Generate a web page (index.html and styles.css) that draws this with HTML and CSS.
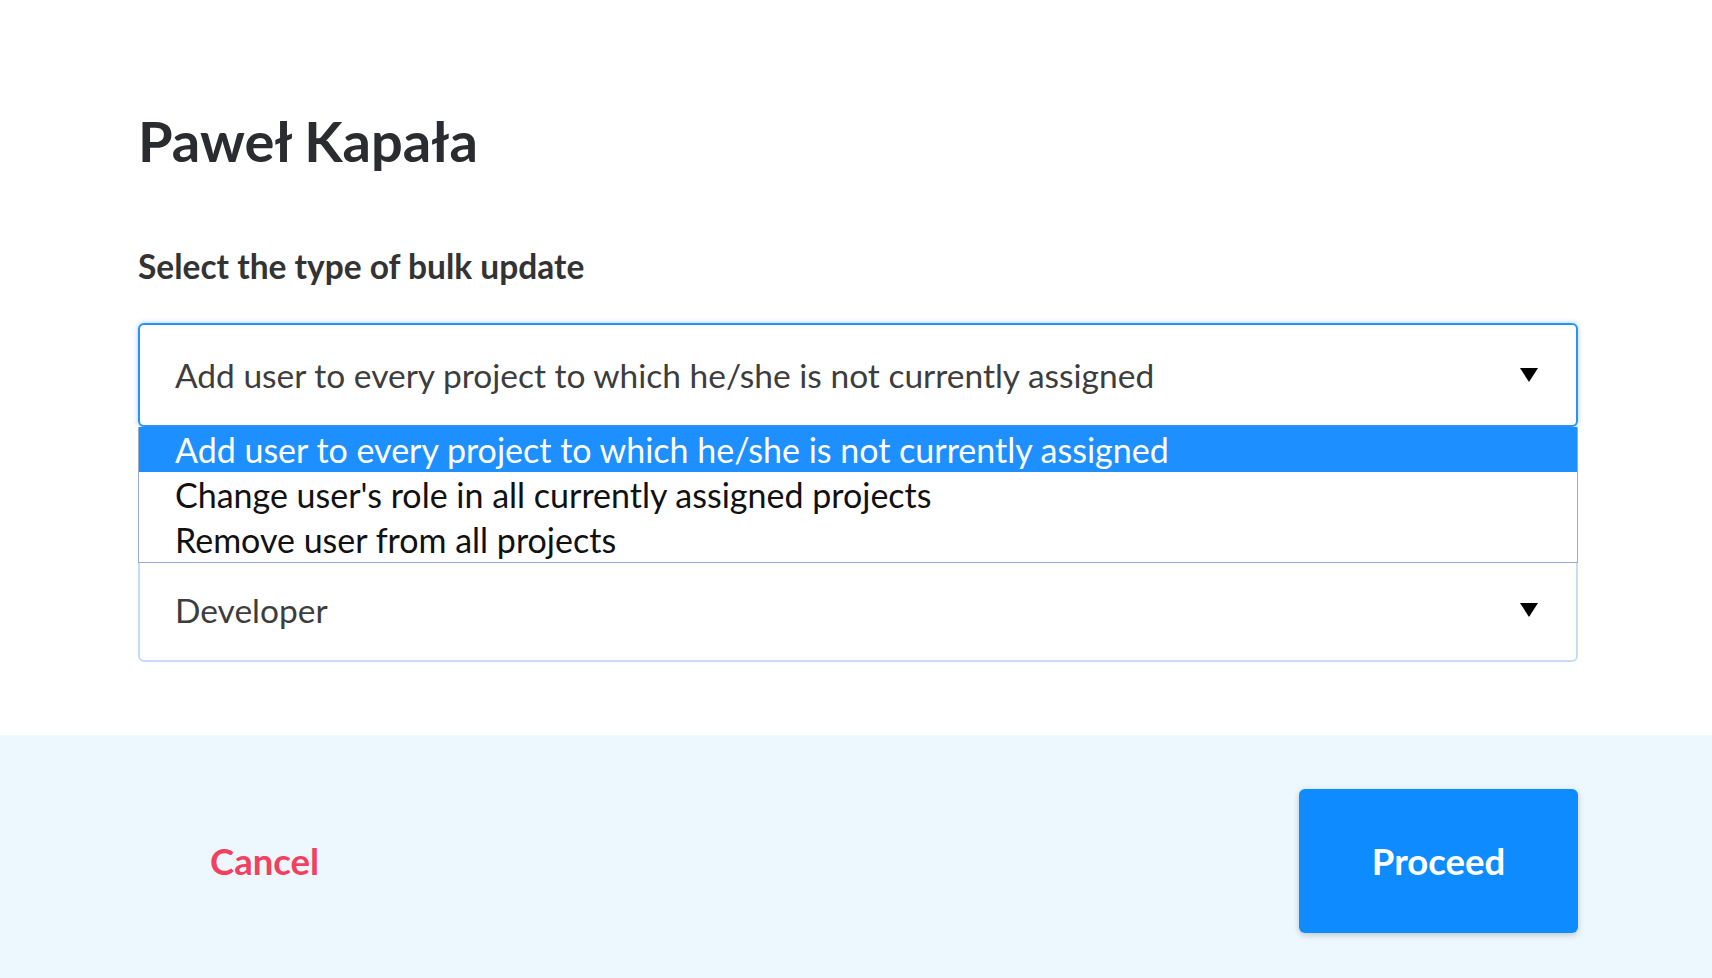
FILE: index.html
```html
<!DOCTYPE html>
<html lang="en">
<head>
  <meta charset="UTF-8" />
  <title>Bulk update</title>
  <meta name="viewport" content="width=device-width, initial-scale=1.0"/>
  <link rel="stylesheet" href="styles.css">
</head>
<body>

  <div class="dialog">
    <div class="content">
      <h1 class="title">Paweł Kapała</h1>

      <div class="label">Select the type of bulk update</div>

      <div class="field">
        <div class="select focused">
          <span class="value">Add user to every project to which he/she is not currently assigned</span>
          <span class="arrow"></span>
        </div>
        <ul class="menu">
          <li class="option selected">Add user to every project to which he/she is not currently assigned</li>
          <li class="option">Change user's role in all currently assigned projects</li>
          <li class="option">Remove user from all projects</li>
        </ul>
      </div>

      <div class="select role">
        <span class="value">Developer</span>
        <span class="arrow"></span>
      </div>
    </div>

    <div class="footer">
      <button class="cancel">Cancel</button>
      <button class="proceed">Proceed</button>
    </div>
  </div>

</body>
</html>
```

FILE: styles.css
```css
body {
  margin: 0;
  font-family: Lato, "Open Sans", sans-serif;
  background: #fff;
  color: #2b2d31;
}
.dialog {
  display: flex;
  flex-direction: column;
  height: 978px;
}
.content {
  padding: 107px 134px 0 138px;
  flex: 1;
}
.title {
  margin: 0;
  font-size: 56px;
  line-height: 1.2;
  font-weight: 700;
  color: #2a2c30;
}
.label {
  margin-top: 72px;
  font-size: 33.5px;
  line-height: 1.2;
  font-weight: 700;
  color: #333;
}
.field {
  position: relative;
  margin-top: 37px;
}
.select {
  display: flex;
  align-items: center;
  justify-content: space-between;
  box-sizing: border-box;
  height: 104px;
  padding: 0 38px 0 35px;
  border: 2px solid #c7ddf6;
  border-radius: 6px;
  background: #fff;
  font-size: 33.5px;
  line-height: 1.2;
  color: #3d3d3d;
}
.select.focused {
  border-color: #2b93f7;
  box-shadow: 0 0 5px rgba(30, 144, 255, 0.45);
}
.select.role {
  margin-top: 131px;
}
.arrow {
  width: 0;
  height: 0;
  border-left: 9px solid transparent;
  border-right: 9px solid transparent;
  border-top: 14px solid #000;
}
.menu {
  position: absolute;
  left: 0;
  right: 0;
  top: 100%;
  margin: 0;
  padding: 0;
  list-style: none;
  background: #fff;
  border: 1px solid #9aabd0;
  border-top: none;
  z-index: 2;
}
.option {
  height: 45px;
  line-height: 45px;
  padding-left: 36px;
  font-size: 34px;
  color: #111;
  white-space: nowrap;
}
.option.selected {
  background: #1e8ffe;
  color: #fff;
}
.footer {
  display: flex;
  align-items: center;
  justify-content: space-between;
  height: 243px;
  box-sizing: border-box;
  padding: 54px 134px 45px 138px;
  background: #edf7fe;
}
button {
  font-family: Lato, "Open Sans", sans-serif;
  font-weight: 700;
  font-size: 36.5px;
  border: none;
  cursor: pointer;
}
.cancel {
  background: none;
  color: #f2415e;
  padding: 0 0 0 72px;
}
.proceed {
  width: 279px;
  height: 144px;
  background: #0d8bff;
  color: #fff;
  border-radius: 6px;
  box-shadow: 0 2px 6px rgba(0, 0, 0, 0.2);
}
```
